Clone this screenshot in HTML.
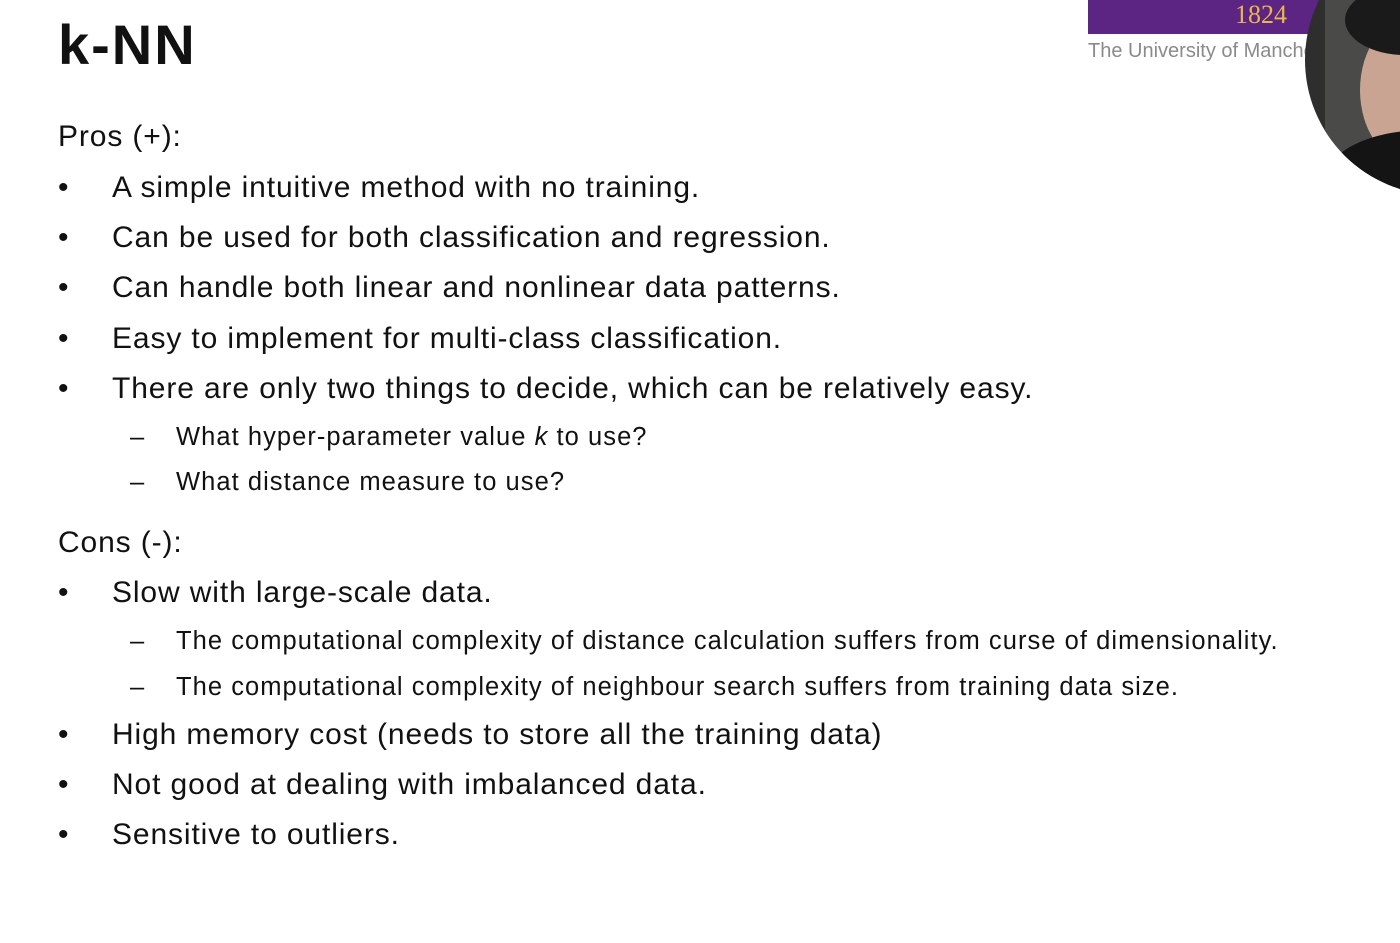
<!DOCTYPE html>
<html><head><style>
body{margin:0;width:1400px;height:943px;background:#fff;overflow:hidden;position:relative;font-family:"Liberation Sans",sans-serif;color:#111}
.t{position:absolute;white-space:nowrap}
.h{left:58px;top:12px;font-size:56px;font-weight:bold;letter-spacing:2px}
.m{font-size:30px;letter-spacing:0.88px}
.s{font-size:25.5px;letter-spacing:1.05px}
</style></head><body>
<div style="position:absolute;left:1088px;top:0;width:242px;height:34px;background:#5c2483"></div>
<div class="t" style="left:1235px;top:0px;font-family:'Liberation Serif',serif;font-size:26px;color:#e8b84a">1824</div>
<div class="t" style="left:1088px;top:40px;font-size:20px;color:#8a8a8a">The University of Manche</div>
<div style="position:absolute;left:1305px;top:-75px;width:270px;height:270px;border-radius:50%;overflow:hidden;background:#2e2e2e">
<div style="position:absolute;left:20px;top:40px;width:80px;height:200px;background:#4a4a48"></div>
<div style="position:absolute;left:55px;top:90px;width:110px;height:150px;border-radius:50%;background:#c9a493"></div>
<div style="position:absolute;left:40px;top:60px;width:120px;height:70px;border-radius:50%;background:#1a1a1a"></div>
<div style="position:absolute;left:20px;top:205px;width:200px;height:100px;border-radius:50%;background:#141414"></div>
</div>
<div class="t h">k-NN</div>
<div class="t m" style="left:58px;top:120px">Pros (+):</div>
<div class="t m" style="left:58px;top:171px">•</div><div class="t m" style="left:112px;top:171px">A simple intuitive method with no training.</div>
<div class="t m" style="left:58px;top:221px">•</div><div class="t m" style="left:112px;top:221px">Can be used for both classification and regression.</div>
<div class="t m" style="left:58px;top:271px">•</div><div class="t m" style="left:112px;top:271px">Can handle both linear and nonlinear data patterns.</div>
<div class="t m" style="left:58px;top:322px">•</div><div class="t m" style="left:112px;top:322px">Easy to implement for multi-class classification.</div>
<div class="t m" style="left:58px;top:372px">•</div><div class="t m" style="left:112px;top:372px">There are only two things to decide, which can be relatively easy.</div>
<div class="t s" style="left:130px;top:423px">–</div><div class="t s" style="left:176px;top:423px">What hyper-parameter value <i>k</i> to use?</div>
<div class="t s" style="left:130px;top:468px">–</div><div class="t s" style="left:176px;top:468px">What distance measure to use?</div>
<div class="t m" style="left:58px;top:526px">Cons (-):</div>
<div class="t m" style="left:58px;top:576px">•</div><div class="t m" style="left:112px;top:576px">Slow with large-scale data.</div>
<div class="t s" style="left:130px;top:627px">–</div><div class="t s" style="left:176px;top:627px">The computational complexity of distance calculation suffers from curse of dimensionality.</div>
<div class="t s" style="left:130px;top:673px">–</div><div class="t s" style="left:176px;top:673px">The computational complexity of neighbour search suffers from training data size.</div>
<div class="t m" style="left:58px;top:718px">•</div><div class="t m" style="left:112px;top:718px">High memory cost (needs to store all the training data)</div>
<div class="t m" style="left:58px;top:768px">•</div><div class="t m" style="left:112px;top:768px">Not good at dealing with imbalanced data.</div>
<div class="t m" style="left:58px;top:818px">•</div><div class="t m" style="left:112px;top:818px">Sensitive to outliers.</div>
</body></html>
